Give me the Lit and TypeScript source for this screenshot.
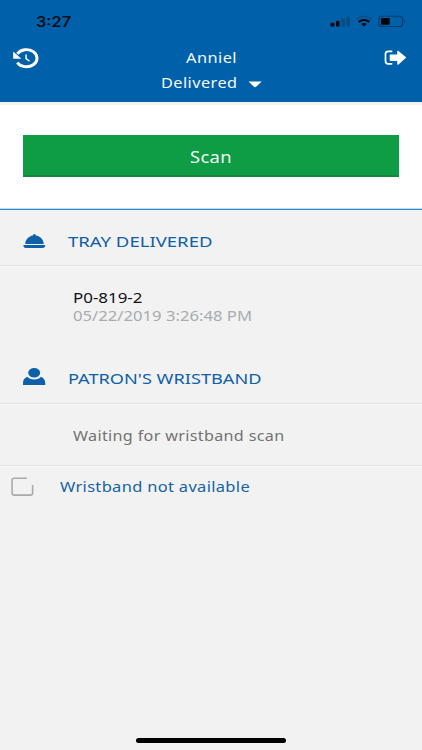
import { LitElement, html, css, svg } from "lit";
import { customElement, property } from "lit/decorators.js";

/** A single line of text stretched to a given width. */
@customElement("wide-text")
class WideText extends LitElement {
  @property() text = "";
  @property({ type: Number }) width = 100;
  @property({ type: Number }) size = 15;

  static styles = css`
    :host { display: block; flex: none; height: 18px; }
    svg { display: block; overflow: visible; }
    text { fill: currentColor; }
  `;

  render() {
    return html`<svg width=${this.width} height="18">
      ${svg`<text x="0" y="14" font-size=${this.size} textLength=${this.width} lengthAdjust="spacingAndGlyphs">${this.text}</text>`}
    </svg>`;
  }
}

@customElement("app-root")
class AppRoot extends LitElement {
  static styles = css`
    :host {
      display: flex;
      flex-direction: column;
      height: 750px;
      background: #f2f2f2;
      font-family: "Noto Sans", sans-serif;
      overflow: hidden;
    }
    svg { display: block; flex: none; }
    header { height: 102px; box-sizing: border-box; background: #0060a9; color: #f3f8fc; }
    .status {
      height: 44px; box-sizing: border-box; padding: 12px 16px 0 35.5px;
      display: flex; justify-content: space-between; align-items: flex-start;
      color: #071019; font-family: Inter, sans-serif; font-weight: 600;
    }
    .status wide-text { margin-top: .5px; }
    .bar { display: grid; grid-template-columns: 40px 1fr 40px; padding: 4px 14px 0 12px; }
    .back { margin-top: -1px; }
    .exit { justify-self: end; }
    .titles { display: flex; flex-direction: column; gap: 7px; padding-top: 1px; letter-spacing: .4px; }
    .name { padding-left: 133.5px; }
    .mode { padding-left: 109px; display: flex; gap: 10.5px; }
    .caret { margin-top: 7px; }
    .scan-area {
      height: 108px; box-sizing: border-box;
      background: #fff; border-top: 3px solid #f1f3f2; border-bottom: 1px solid #3a83c9;
      box-shadow: inset 0 -1px #b9dcf5; padding: 30px 23px 0;
    }
    .scan {
      display: flex; justify-content: center; box-sizing: border-box; width: 100%; height: 42px;
      padding: 14px 0 0; margin: 0; border: 0; border-bottom: 2px solid #17853e;
      background: #0e9c44; color: #f3fbf5; font: inherit; letter-spacing: .3px; cursor: pointer;
    }
    .heading {
      box-sizing: border-box; display: flex; gap: 22px; padding-left: 23px;
      color: #0e60a8; border-bottom: 1px solid #dfe1e2; box-shadow: 0 1px #f8f8f8;
    }
    .tray { height: 56px; padding-top: 23px; }
    .tray svg { margin-top: 1px; }
    .patron { height: 56px; padding-top: 22px; }
    .patron svg { margin-top: -2px; }
    .details { height: 82px; box-sizing: border-box; padding: 23px 0 0 73.3px; }
    .code { color: #111; }
    .date { color: #a9abad; }
    .waiting {
      height: 62px; box-sizing: border-box; padding: 23px 0 0 73.3px; color: #727272;
      border-bottom: 1px solid #e2e3e4; box-shadow: 0 1px #f9f9f9; letter-spacing: .3px;
    }
    .missing { display: flex; gap: 26.3px; padding: 12px 0 0 11px; color: #1462a7; letter-spacing: .3px; }
    .missing svg { margin-top: -1px; }
    .home { width: 150px; height: 4.5px; border-radius: 3px; background: #000; margin: auto auto 7.5px 136px; }
  `;

  render() {
    return html`
      <header>
        <div class="status">
          <wide-text text="3:27" width="35" size="14"></wide-text>
          <svg width="76" height="18" viewBox="330 12 76 18">
            <rect x="330.5" y="22.8" width="4" height="3.7" rx=".8" fill="#02080e" />
            <rect x="336" y="20.8" width="3.5" height="5.7" rx=".8" fill="#02080e" />
            <rect x="341.5" y="18.5" width="3.5" height="8" rx=".8" fill="#0a4b80" />
            <rect x="346.5" y="16.5" width="3.3" height="10" rx=".8" fill="#0a4b80" />
            <path d="M356.8 19.4Q364 13.7 371.2 19.4" fill="none" stroke="#07508b" stroke-width="2" />
            <path d="M358.6 21.9Q364 18 369.4 21.9" fill="none" stroke="#02080e" stroke-width="2" />
            <path d="M361.2 24Q364 21.9 366.8 24L364 26.6Z" fill="#02080e" />
            <rect x="378.9" y="16.3" width="23.6" height="10.2" rx="2.6" fill="none" stroke="#063c6b" stroke-width="1.1" />
            <rect x="381" y="18" width="8.7" height="6.8" rx=".8" fill="#010408" />
            <path d="M404 19.5q2 2 0 4z" fill="#063c6b" />
          </svg>
        </div>
        <div class="bar">
          <svg class="back" width="28" height="22" viewBox="12 47 28 22">
            <path d="M17.3 53.8A10.6 8.6 0 1 1 17.3 62.6" fill="none" stroke="#fff" stroke-width="2.9" />
            <path d="M13.2 51.6V58.8H21.4Z" fill="#fff" />
            <path d="M26.1 54.4V58.6L29.5 61.1" fill="none" stroke="#fff" stroke-width="1.5" />
          </svg>
          <div class="titles">
            <wide-text class="name" text="Anniel" width="51" size="14.6"></wide-text>
            <div class="mode">
              <wide-text text="Delivered" width="76.5" size="14.6"></wide-text>
              <svg class="caret" width="14" height="7" viewBox="0 0 14 7"><path d="M.5.5H13.7L8.4 5.6Q7 6.7 5.7 5.6Z" fill="#fff" /></svg>
            </div>
          </div>
          <svg class="exit" width="24" height="20" viewBox="384 48 24 20">
            <path d="M392.3 51.4H388.2Q385.5 51.4 385.5 54V61Q385.5 63.8 388.2 63.8H392.3" fill="none" stroke="#fff" stroke-width="1.7" />
            <path d="M390.3 54.6H397.2V51.2Q397.5 50.4 398.5 50.9L406.3 57.6L398.5 64.5Q397.4 65 397.2 64.1V60.9H390.3Q389.7 60.8 389.7 60V55.4Q389.7 54.7 390.3 54.6Z" fill="#fff" />
          </svg>
        </div>
      </header>
      <section class="scan-area">
        <button class="scan"><wide-text text="Scan" width="42" size="16.4"></wide-text></button>
      </section>
      <div class="heading tray">
        <svg width="23" height="16" viewBox="0 0 23 16">
          <path d="M2.3 10C2.3 5.3 6 2 9.9 1.5Q9.7 0 11.3 0T12.8 1.5C17.2 2.2 20.6 5.3 20.7 10Z" fill="currentColor" />
          <path d="M.4 11H22.2Q22.2 14 19.5 14H3Q.3 14 .4 11Z" fill="currentColor" />
        </svg>
        <wide-text text="TRAY DELIVERED" width="144.5" size="15"></wide-text>
      </div>
      <div class="details">
        <wide-text class="code" text="P0-819-2" width="69.5" size="14.3"></wide-text>
        <wide-text class="date" text="05/22/2019 3:26:48 PM" width="179" size="14.3"></wide-text>
      </div>
      <div class="heading patron">
        <svg width="23" height="18" viewBox="0 0 23 18">
          <ellipse cx="11.2" cy="4.8" rx="6" ry="4.8" fill="currentColor" />
          <path d="M4.6 8.8C6.4 12.3 16 12.3 17.8 8.8Q22.2 10.5 22.2 15V17H0V15Q0 10.4 4.6 8.8Z" fill="currentColor" />
        </svg>
        <wide-text text="PATRON'S WRISTBAND" width="193.5" size="15"></wide-text>
      </div>
      <div class="waiting">
        <wide-text text="Waiting for wristband scan" width="211.5" size="15"></wide-text>
      </div>
      <div class="missing">
        <svg width="23" height="19" viewBox="11 477 23 19">
          <path d="M26.8 478.2H14.3Q12.1 478.2 12.1 480.2V493.2Q12.1 495.1 14.3 495.1H30.5Q32.6 495.1 32.6 493.2V485" fill="none" stroke="#a9aaac" stroke-width="1.6" />
        </svg>
        <wide-text text="Wristband not available" width="190" size="15"></wide-text>
      </div>
      <div class="home"></div>
    `;
  }
}
